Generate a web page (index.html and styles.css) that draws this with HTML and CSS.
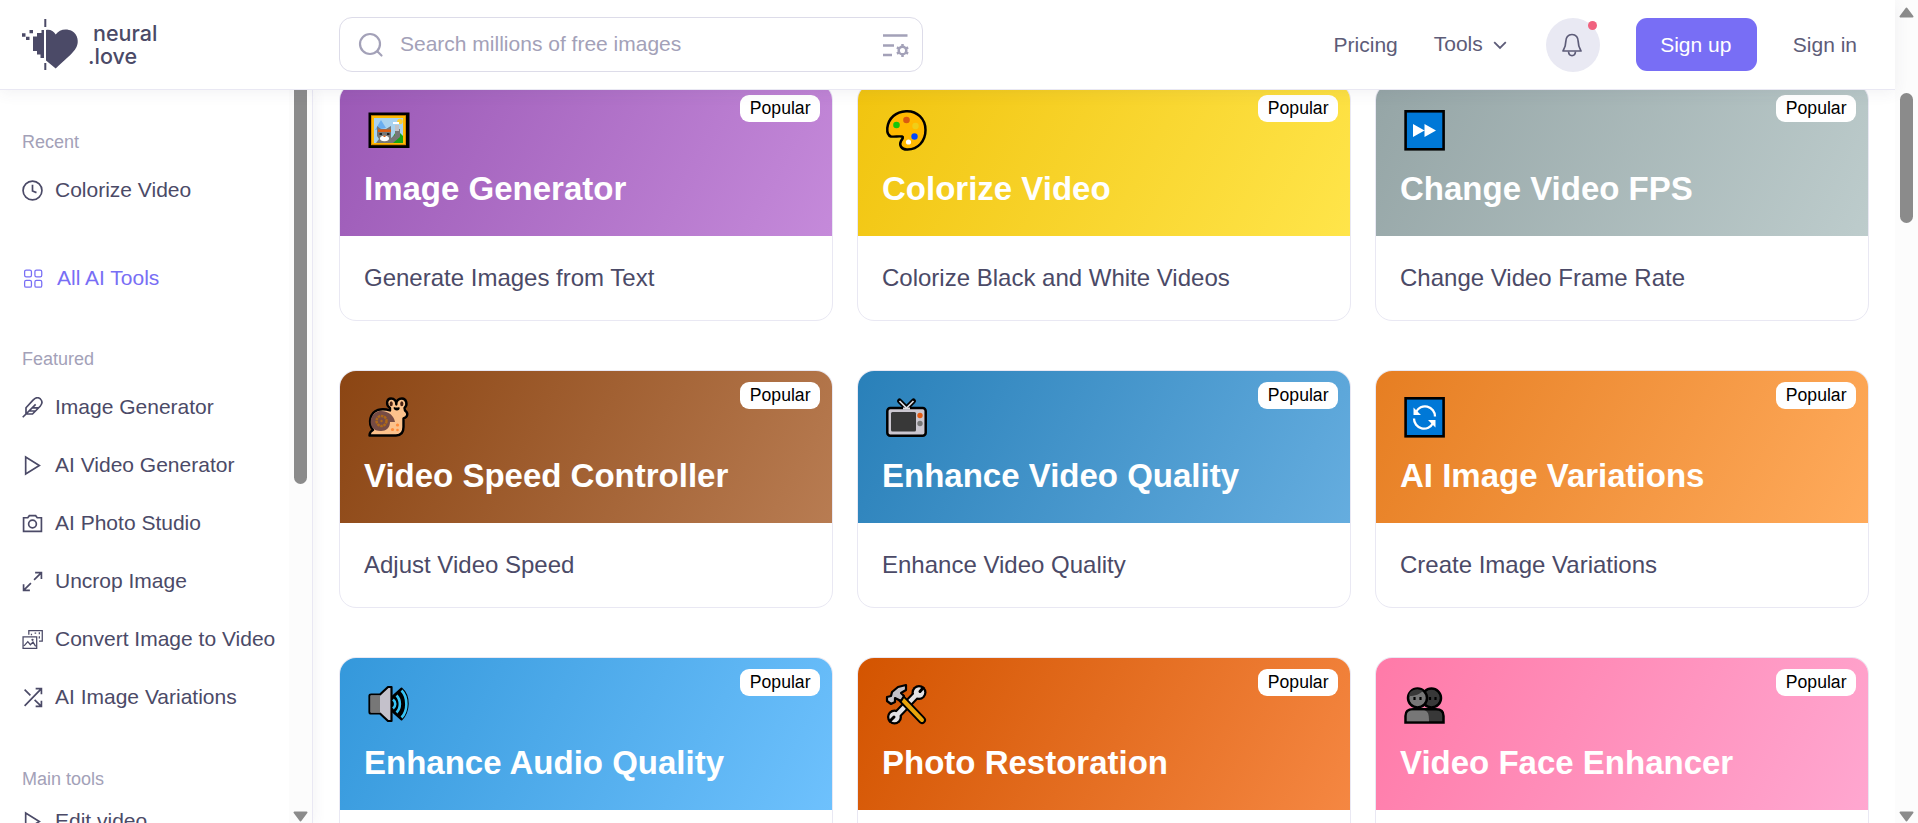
FILE: index.html
```html
<!DOCTYPE html>
<html lang="en">
<head>
  <meta charset="UTF-8">
  <meta name="viewport" content="width=device-width, initial-scale=1.0">
  <title>All AI Tools - neural.love</title>
  <link rel="stylesheet" href="styles.css">
</head>
<body>
  <div class="page">
    <header class="header">
      <a class="logo">
        <svg width="58" height="54" viewBox="21 18 58 54" fill="#4b4a67">
          <path d="M46 30C50 29 53.500 31 55.700 34.500C59 29.500 66 28 72 31C78 34.500 79 42 76.500 47C73 54 63 61 55.700 68.500L46 60.500Z"/>
          <path d="M44 30H41.500V33H37V36.500H33V51H37V54.500H40.500V58H44Z"/>
          <path d="M44.300 19H46.300V27H44.300ZM44.300 63H46.300V70H44.300ZM22 33.300H25.500V36.800H22ZM26 36.800H29.500V40H26ZM29.500 30H33V33.300H29.500Z"/>
        </svg>
        <span class="logo-text"><span class="logo-top">neural</span><span>.love</span></span>
      </a>
      <div class="search">
        <svg width="26" height="26" viewBox="0 0 26 26" fill="none" stroke="#a3a1b8" stroke-width="2.200" stroke-linecap="round"><circle cx="12" cy="12" r="10"/><path d="M19.500 19.500L23.500 23.500"/></svg>
        <span class="search-text">Search millions of free images</span>
        <svg width="28" height="24" viewBox="0 0 28 24" fill="none" stroke="#a3a1b8" stroke-width="2.500"><path d="M1 2.500H25.500M1 12.500H12M1 22H10"/><circle cx="20.500" cy="17.500" r="3.800"/><path d="M20.500 11V14M20.500 21V24M14.900 14.300L17.500 15.800M23.500 19.200L26.100 20.700M14.900 20.700L17.500 19.200M23.500 15.800L26.100 14.300"/></svg>
      </div>
      <nav class="nav">
        <a class="nav-link">Pricing</a>
        <a class="nav-link nav-tools">Tools
          <svg class="chevron" width="14" height="9" viewBox="0 0 14 9" fill="none" stroke="#5d5c78" stroke-width="1.800"><path d="M1.200 1.200L7 7L12.800 1.200"/></svg>
        </a>
        <a class="bell">
          <svg width="20" height="24" viewBox="0 0 20 24" fill="none" stroke="#5d5c78" stroke-width="1.700" stroke-linejoin="round"><path d="M10 1.500C6 1.500 3.800 4.500 3.800 8.500C3.800 13.500 2.500 15.500 1 18H19C17.500 15.500 16.200 13.500 16.200 8.500C16.200 4.500 14 1.500 10 1.500Z"/><path d="M6.500 18.500C7 24 13 24 13.500 18.500"/></svg>
          <span class="bell-dot"></span>
        </a>
        <a class="signup">Sign up</a>
        <a class="nav-link">Sign in</a>
      </nav>
    </header>

    <div class="layout">
      <aside class="sidebar">
        <div class="menu">
          <div class="menu-title">Recent</div>
          <a class="menu-item">
            <svg class="icon" viewBox="0 0 20 20"><circle cx="10" cy="10" r="9"/><path d="M10 4.500V10.500L13.800 12"/></svg>
            Colorize Video
          </a>

          <a class="menu-item active">
            <svg class="icon icon-grid" viewBox="0 0 20 20"><rect x="2.500" y="2" width="6.500" height="6.500" rx="1.500"/><rect x="12.300" y="2" width="6.500" height="6.500" rx="1.500"/><rect x="2.500" y="11.800" width="6.500" height="6.500" rx="1.500"/><rect x="12.300" y="11.800" width="6.500" height="6.500" rx="1.500"/></svg>
            All AI Tools
          </a>

          <div class="menu-title">Featured</div>
          <a class="menu-item">
            <svg class="icon" viewBox="0 0 20 20"><path d="M.7 19.300L13 7M3.800 16.200V10.200L10.500 3C13 .3 15.700.3 17.500 1.900C19.700 4 19.300 6.500 17.300 8.800L10 16.200ZM6.800 13.300H13M9.800 10.300H15.800"/></svg>
            Image Generator
          </a>
          <a class="menu-item">
            <svg class="icon" viewBox="0 0 20 20"><path d="M3.500 2V18L16.500 10Z"/></svg>
            AI Video Generator
          </a>
          <a class="menu-item">
            <svg class="icon" viewBox="0 0 20 20"><path d="M1.500 4.500H5.500L7 2.500H13L14.500 4.500H18.500V17.500H1.500Z"/><circle cx="10" cy="10.500" r="3.700"/></svg>
            AI Photo Studio
          </a>
          <a class="menu-item">
            <svg class="icon" viewBox="0 0 20 20"><path d="M11.500 8.500L18 2M12.500 1.500H18.500V7.500M8.500 11.500L2 18M1.500 12.500V18.500H7.500"/></svg>
            Uncrop Image
          </a>
          <a class="menu-item">
            <svg class="icon icon-thin" viewBox="0 0 20 20"><path d="M1 7.500H14V18.500H1ZM2 16L5.500 12L8 15L10.500 12.500L13 16.500M6.500 5.500V1.500H19.300V11.500H16.200M9 4.500V6M12 4H13.500M16.500 3V5M16.500 7V9"/><circle cx="10" cy="10.300" r=".5"/></svg>
            Convert Image to Video
          </a>
          <a class="menu-item">
            <svg class="icon" viewBox="0 0 20 20"><path d="M2.500 18L18 2M13 1.500H18.500V7M2.500 2.500L8 8M12 12.300L18 18M18.500 13V18.500H13"/></svg>
            AI Image Variations
          </a>

          <div class="menu-title compact">Main tools</div>
          <a class="menu-item">
            <svg class="icon" viewBox="0 0 20 20"><path d="M3.500 2V18L16.500 10Z"/></svg>
            Edit video
          </a>
        </div>
        <div class="scrollbar">
          <div class="thumb thumb-side"></div>
          <svg class="arrow" width="15" height="11" viewBox="0 0 15 11"><path d="M1.500 1.500H13.500L7.500 9.500Z"/></svg>
        </div>
      </aside>

      <main class="content">
        <div class="cards">
          <div class="card">
            <div class="card-top purple">
              <span class="badge">Popular</span>
              <svg class="emoji" viewBox="0 0 41 41"><rect x=".5" y="2.500" width="41" height="35.500" fill="#000"/><rect x="3" y="5.200" width="35" height="30" fill="#d98b00"/><rect x="4" y="6" width="33" height="28" fill="#ffb900"/><rect x="6" y="8" width="29" height="25" fill="#a9d3ef"/><path d="M7 20L13 10L18 18Z" fill="#69aef0"/><path d="M21 33L29 20L35 26V33Z" fill="#16a316"/><circle cx="32" cy="11.500" r="2.800" fill="#fbce37"/><path d="M25 12H31V14H25Z" fill="#fff"/><path d="M9 16L13 19H18L23 16V28L27 25V19H32V27L25 33H8L11 29L9 26Z" fill="#777"/><path d="M27 15H31V21H27Z" fill="#c2c2c5"/><path d="M10 19.500H23V22H10Z" fill="#dc5b10"/><path d="M11.500 23H14V25H11.500ZM19 23H21.500V25H19Z" fill="#222"/><ellipse cx="16.500" cy="28.500" rx="4.500" ry="2.700" fill="#fff"/><path d="M15.500 25.500H17.500V27H15.500Z" fill="#dc5b10"/></svg>
              <h2 class="card-title">Image Generator</h2>
            </div>
            <p class="card-text">Generate Images from Text</p>
          </div>
          <div class="card">
            <div class="card-top yellow">
              <span class="badge">Popular</span>
              <svg class="emoji" viewBox="0 0 41 41"><path d="M20 1.200C31 .5 39.500 9 39.500 20C39.500 31 32 39.800 21 39.500C15 39.500 13 35 15 31C17 28 17.500 27 16 26.500C12 26 9 27 5 26.500C2 25.500 1 22 1.300 18C2.500 8 10 1.700 20 1.200Z" fill="#ffb900" stroke="#000" stroke-width="2.500"/><circle cx="10.500" cy="15" r="3.300" fill="#16c60c"/><circle cx="20.500" cy="10" r="3.300" fill="#da5b10"/><circle cx="29.500" cy="16" r="3.200" fill="#f0ce18"/><circle cx="28.500" cy="26.500" r="3.200" fill="#0047ff"/><ellipse cx="22.500" cy="32" rx="2.600" ry="2.600" fill="#fff"/></svg>
              <h2 class="card-title">Colorize Video</h2>
            </div>
            <p class="card-text">Colorize Black and White Videos</p>
          </div>
          <div class="card">
            <div class="card-top gray">
              <span class="badge">Popular</span>
              <svg class="emoji" viewBox="0 0 41 41"><rect x="1.600" y="1.300" width="38" height="38" fill="#0078d7" stroke="#000" stroke-width="2.600"/><path d="M9 14L20.500 20.500L9 27ZM20.500 14L32 20.500L20.500 27Z" fill="#fff"/></svg>
              <h2 class="card-title">Change Video FPS</h2>
            </div>
            <p class="card-text">Change Video Frame Rate</p>
          </div>

          <div class="card">
            <div class="card-top brown">
              <span class="badge">Popular</span>
              <svg class="emoji" viewBox="0 0 41 41"><path d="M1.500 38.500C1.500 35.500 3 34 5 33C-.5 26 2 15.500 10 12.800C14 11.800 18 12 22 13.500V11C17.500 8 18.500 1.500 23 1.500C26.500 1.500 28.500 4 28.300 7.500C28 4 30.500 1.500 34 1.500C38.500 1.500 40 8 36.500 11L37 13.500C40.500 16 40 20 35.500 21.500V30C35.500 36 33 38.500 28 38.500Z" fill="#fcc28c" stroke="#000" stroke-width="2.400" stroke-linejoin="round"/><path d="M4 30C0 22 6 14 13 14C21 14 26 19 27 25H22C22 31 18 34 13 34C9 34 6 33 4 30Z" fill="#764c45"/><circle cx="13.500" cy="24" r="5" fill="none" stroke="#ae6818" stroke-width="2.500" stroke-dasharray="2.500 .7"/><circle cx="13.500" cy="24" r="1.200" fill="#ae6818"/><ellipse cx="23.200" cy="6.800" rx="1.600" ry="2.500" fill="#4b2414"/><ellipse cx="33.800" cy="6.800" rx="1.600" ry="2.500" fill="#4b2414"/><path d="M26 10.500C27 13.500 31 13.500 31 10.500" fill="#000" stroke="#000" stroke-width="1.500"/><circle cx="29.500" cy="28" r="1.600" fill="#ff8c3b"/><circle cx="24.500" cy="32.500" r="1.600" fill="#ff8c3b"/><circle cx="29.500" cy="33" r="1.300" fill="#ff8c3b"/></svg>
              <h2 class="card-title">Video Speed Controller</h2>
            </div>
            <p class="card-text">Adjust Video Speed</p>
          </div>
          <div class="card">
            <div class="card-top blue">
              <span class="badge">Popular</span>
              <svg class="emoji" viewBox="0 0 41 41"><path d="M13.500 4L20.500 11L27.500 4" fill="none" stroke="#000" stroke-width="5" stroke-linecap="round"/><rect x="1.300" y="11" width="38.400" height="27.800" rx="3" fill="#cbc7d0" stroke="#000" stroke-width="2.500"/><path d="M13.500 4L20.500 11L27.500 4" fill="none" stroke="#dcdce2" stroke-width="1.700"/><path d="M17 10.500H24V12.500H17Z" fill="#dcdce2"/><rect x="5" y="15" width="25" height="19.500" rx="1.500" fill="#383838"/><circle cx="34" cy="18.500" r="2.700" fill="#e25b11"/><circle cx="34" cy="26.500" r="2.700" fill="#777"/></svg>
              <h2 class="card-title">Enhance Video Quality</h2>
            </div>
            <p class="card-text">Enhance Video Quality</p>
          </div>
          <div class="card">
            <div class="card-top orange">
              <span class="badge">Popular</span>
              <svg class="emoji" viewBox="0 0 41 41"><rect x="1.600" y="1.300" width="38" height="38" fill="#0078d7" stroke="#000" stroke-width="2.600"/><path d="M12 15A10 10 0 0 1 31 19.500M29 26A10 10 0 0 1 10 21.500" fill="none" stroke="#fff" stroke-width="2.300"/><path d="M9.500 10.500V18H17ZM31.500 30.500V23H24Z" fill="#fff"/></svg>
              <h2 class="card-title">AI Image Variations</h2>
            </div>
            <p class="card-text">Create Image Variations</p>
          </div>

          <div class="card">
            <div class="card-top sky">
              <span class="badge">Popular</span>
              <svg class="emoji" viewBox="0 0 41 41"><path d="M1.500 11.500Q1.500 10.500 3 10.500H12L20 3H23.500V37H20L12 29.500H3Q1.500 29.500 1.500 28Z" fill="#c4c1cb" stroke="#000" stroke-width="2.200" stroke-linejoin="round"/><path d="M2.500 11.500H12V28.500H2.500Z" fill="#777"/><path d="M24 13L33.500 4.500C42 12 41.500 27 33.500 35.500L24 27Z" fill="#000" stroke="#000" stroke-width="2" stroke-linejoin="round"/><path d="M25 15.500C28 18 28 22 25 24.500M28.500 11.500C33 16 33 24 28.500 28.500M33.500 6.500C40 13 40 27 33.500 33.500" fill="none" stroke="#37c4f5" stroke-width="2.600"/></svg>
              <h2 class="card-title">Enhance Audio Quality</h2>
            </div>
            <p class="card-text">Enhance Sound in Audio</p>
          </div>
          <div class="card">
            <div class="card-top rust">
              <span class="badge">Popular</span>
              <svg class="emoji" viewBox="0 0 41 41"><g stroke-linecap="round"><path d="M8 34L33 8" stroke="#000" stroke-width="8.500"/><circle cx="8.500" cy="33" r="7.500" fill="#000"/><circle cx="33" cy="8.500" r="7.500" fill="#000"/><path d="M8 34L33 8" stroke="#e2e2e5" stroke-width="4.500"/><circle cx="8.500" cy="33" r="5.200" fill="#e2e2e5"/><circle cx="33" cy="8.500" r="5.200" fill="#e2e2e5"/><path d="M4 37L8 33M34 7.500L37 4" stroke="#000" stroke-width="3"/><path d="M14 13L36 36" stroke="#000" stroke-width="8"/><path d="M16 15L36 36" stroke="#e9a50b" stroke-width="4"/><path d="M20 1L12 3L6 8L5 12L1 13V17L5 20L9 18V14L15 17L18 12L15 9L20 6Z" fill="#c2c1c8" stroke="#000" stroke-width="2.200" stroke-linejoin="round"/></g></svg>
              <h2 class="card-title">Photo Restoration</h2>
            </div>
            <p class="card-text">Restore Old Photos</p>
          </div>
          <div class="card">
            <div class="card-top pink">
              <span class="badge">Popular</span>
              <svg class="emoji" viewBox="0 0 41 41"><circle cx="27.500" cy="14" r="9.500" fill="#383838" stroke="#000" stroke-width="2.500"/><path d="M1.500 38.500V32C1.500 27 4.500 25.300 9 25.300H32C37 25.300 39.500 28 39.500 32V38.500Z" fill="#383838" stroke="#000" stroke-width="2.500"/><path d="M2.800 37.300V32C2.800 28 5 26.500 9 26.500H20C24 27 25 30 25 37.300Z" fill="#777"/><circle cx="13.500" cy="14" r="9.500" fill="#777" stroke="#000" stroke-width="2.500"/><path d="M5 12C5 6 13 4 19 7C16 10 11 12 5 12Z" fill="#383838"/><path d="M10.500 13V16M16.500 13V16M26 13V16M31.500 13V16" stroke="#000" stroke-width="2.200"/></svg>
              <h2 class="card-title">Video Face Enhancer</h2>
            </div>
            <p class="card-text">Enhance Faces in Video</p>
          </div>
        </div>
      </main>
    </div>
  </div>

  <div class="scrollbar">
    <svg class="arrow arrow-top" width="15" height="11" viewBox="0 0 15 11"><path d="M1.500 9.500H13.500L7.500 1.500Z"/></svg>
    <div class="thumb thumb-page"></div>
    <svg class="arrow" width="15" height="11" viewBox="0 0 15 11"><path d="M1.500 1.500H13.500L7.500 9.500Z"/></svg>
  </div>
</body>
</html>
```
FILE: styles.css
```css
* {
  box-sizing: border-box;
}
body {
  margin: 0;
  height: 100vh;
  display: flex;
  overflow: hidden;
  background: #fff;
  color: #4b4a67;
  font-family: "Liberation Sans", Arial, sans-serif;
  font-size: 21px;
}
svg {
  flex-shrink: 0;
}
.page {
  flex: 1;
  min-width: 0;
  height: 100vh;
  display: flex;
  flex-direction: column;
}

/* Header */
.header {
  position: relative;
  z-index: 2;
  flex-shrink: 0;
  display: flex;
  align-items: center;
  height: 90px;
  padding: 0 38px 0 21px;
  background: #fff;
  border-bottom: 1px solid #e9e8f3;
  box-shadow: 0 3px 14px rgba(75, 74, 103, 0.07);
}
.logo {
  display: flex;
  align-items: center;
  width: 318px;
}
.logo-text {
  display: flex;
  flex-direction: column;
  margin-left: 9px;
  font-family: Inter, sans-serif;
  font-size: 21.5px;
  font-weight: 500;
  line-height: 23px;
}
.logo-top {
  margin-left: 5px;
}
.search {
  display: flex;
  align-items: center;
  width: 584px;
  height: 55px;
  padding: 0 12px 0 18px;
  border: 1px solid #dddce9;
  border-radius: 13px;
  color: #a3a1b8;
}
.search-text {
  flex: 1;
  margin: -2px 0 0 16px;
}
.nav {
  display: flex;
  align-items: center;
  margin-left: auto;
}
.nav-link {
  color: #5d5c78;
}
.nav-tools {
  display: flex;
  align-items: center;
  gap: 10px;
  margin: -1px 39px 0 36px;
}
.chevron {
  margin-top: 3px;
}
.bell {
  position: relative;
  display: flex;
  align-items: center;
  justify-content: center;
  width: 54px;
  height: 54px;
  padding-right: 1px;
  border-radius: 50%;
  background: #e9e9f3;
}
.bell-dot {
  position: absolute;
  top: 3px;
  right: 3px;
  width: 9px;
  height: 9px;
  border-radius: 50%;
  background: #f0627f;
}
.signup {
  display: flex;
  align-items: center;
  justify-content: center;
  width: 121px;
  height: 53px;
  margin: 0 36px;
  padding-right: 1px;
  border-radius: 11px;
  background: #786ef5;
  color: #fff;
}

/* Sidebar */
.layout {
  flex: 1;
  min-height: 0;
  display: flex;
}
.sidebar {
  display: flex;
  justify-content: space-between;
  width: 313px;
  border-right: 1px solid #e9e8f3;
  box-shadow: 2px 0 12px rgba(75, 74, 103, 0.06);
  overflow: hidden;
}
.menu {
  padding: 37px 0 0 22px;
  white-space: nowrap;
}
.menu-title {
  height: 34px;
  line-height: 30px;
  font-size: 18px;
  color: #a3a1b8;
}
.menu-title.compact {
  height: 28px;
}
.menu-item {
  display: flex;
  align-items: center;
  gap: 12px;
  height: 58px;
}
.menu-item + .menu-title {
  margin-top: 38px;
}
.menu-item.active {
  margin: 30px 0 -1px;
  gap: 14px;
  color: #786ef5;
}
.icon {
  width: 21px;
  height: 21px;
  fill: none;
  stroke: currentColor;
  stroke-width: 1.6;
}
.icon-grid,
.icon-thin {
  stroke-width: 1.2;
}

/* Scrollbars */
.scrollbar {
  flex-shrink: 0;
  display: flex;
  flex-direction: column;
  align-items: center;
  width: 23px;
  background: #fcfcfc;
}
.thumb {
  width: 13px;
  background: #8b8b8b;
}
.thumb-side {
  height: 394px;
  border-radius: 0 0 7px 7px;
}
.thumb-page {
  height: 130px;
  border-radius: 7px;
}
.arrow {
  margin-top: auto;
  margin-bottom: 1px;
  fill: #8b8b8b;
  stroke: #8b8b8b;
  stroke-width: 2;
  stroke-linejoin: round;
}
.arrow-top {
  margin: 7px 0 75px;
}

/* Cards */
.content {
  flex: 1;
  min-width: 0;
  padding: 0 26px;
  overflow: hidden;
}
.cards {
  display: grid;
  grid-template-columns: repeat(3, 1fr);
  gap: 49px 24px;
  margin-top: -7px;
}
.card {
  height: 238px;
  border: 1px solid #e9e8f3;
  border-radius: 17px;
  overflow: hidden;
}
.card-top {
  position: relative;
  height: 152px;
  padding: 26px 24px 0;
}
.badge {
  position: absolute;
  top: 11px;
  right: 12px;
  height: 27px;
  padding: 0 9.5px;
  border-radius: 9px;
  background: #fff;
  color: #000;
  font-size: 17.6px;
  line-height: 26px;
}
.emoji {
  display: block;
  width: 41px;
  height: 41px;
  margin-left: 4px;
  overflow: visible;
}
.card-title {
  margin: 18px 0 0;
  color: #fff;
  font-size: 33px;
  line-height: 40px;
}
.card-text {
  margin: 0;
  padding: 0 24px;
  font-size: 24px;
  line-height: 83px;
}
.purple {
  background: linear-gradient(118deg, #9b59b6, #c58ada);
}
.yellow {
  background: linear-gradient(118deg, #f1c40f, #ffe54a);
}
.gray {
  background: linear-gradient(118deg, #95a5a6, #bdcccc);
}
.brown {
  background: linear-gradient(118deg, #8b4513, #b87c52);
}
.blue {
  background: linear-gradient(118deg, #2980b9, #65addf);
}
.orange {
  background: linear-gradient(118deg, #e67e22, #ffab5c);
}
.sky {
  background: linear-gradient(118deg, #3498db, #6ec1fd);
}
.rust {
  background: linear-gradient(118deg, #d35400, #f58742);
}
.pink {
  background: linear-gradient(118deg, #ff7aa8, #ffa7d0);
}
```
